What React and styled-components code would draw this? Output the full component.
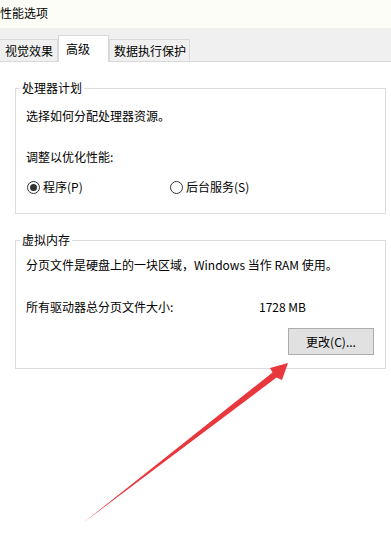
import React from 'react'
import styled, { createGlobalStyle } from 'styled-components'

const GlobalStyle = createGlobalStyle`
  html, body {
    margin: 0;
    padding: 0;
    background: #fff;
  }
  body {
    font-family: "Noto Sans CJK SC", "Microsoft YaHei", sans-serif;
    font-size: 12px;
    color: #000;
  }
`

const Window = styled.div`
  position: relative;
  width: 391px;
  height: 542px;
  overflow: hidden;
  background: #fff;
`

const TitleBar = styled.div`
  height: 28px;
  line-height: 26px;
  background: #fdfdf8;
`

const TabStrip = styled.div`
  display: flex;
  align-items: flex-end;
  height: 34px;
  box-sizing: border-box;
  background: #f0f0f0;
  border-bottom: 1px solid #d9d9d9;
`

const Tab = styled.div`
  box-sizing: border-box;
  width: ${p => p.width}px;
  height: ${p => (p.active ? 27 : 23)}px;
  margin-bottom: -1px;
  padding-left: ${p => p.pad}px;
  line-height: ${p => (p.active ? 26 : 21)}px;
  background: ${p => (p.active ? '#fff' : '#f0f0f0')};
  border: 1px solid #d9d9d9;
  border-bottom: ${p => (p.active ? 'none' : '1px solid #d9d9d9')};
  border-left: ${p => (p.first ? 'none' : '1px solid #d9d9d9')};
  white-space: nowrap;
`

const Content = styled.div`
  padding: 0 5px 0 15px;
`

const Group = styled.fieldset`
  margin: 18px 0 0;
  padding: 0;
  min-width: 0;
  border: 1px solid #dcdcdc;
`

const Legend = styled.legend`
  margin-left: 4px;
  padding: 0 2px;
  line-height: 16px;
`

const Body = styled.div`
  padding: 0 11px ${p => p.bottom}px 10px;
`

const Line = styled.div`
  margin-top: ${p => p.top}px;
  line-height: 16px;
  white-space: nowrap;
`

const RadioRow = styled.div`
  display: flex;
  margin-top: 14px;
  line-height: 16px;
`

const Option = styled.label`
  display: flex;
  align-items: center;
  gap: 3px;
  width: ${p => (p.width ? `${p.width}px` : 'auto')};
`

const RadioDot = styled.span`
  position: relative;
  box-sizing: border-box;
  width: 13px;
  height: 13px;
  margin-left: 1px;
  border: 1px solid #333;
  border-radius: 50%;
  background: #fff;

  &::after {
    content: '';
    display: ${p => (p.checked ? 'block' : 'none')};
    position: absolute;
    left: 2px;
    top: 2px;
    width: 7px;
    height: 7px;
    border-radius: 50%;
    background: #333;
  }
`

const SizeRow = styled.div`
  display: grid;
  grid-template-columns: 233px auto;
  margin-top: 26px;
  line-height: 16px;
`

const ButtonRow = styled.div`
  display: flex;
  justify-content: flex-end;
  margin-top: 13px;
`

const Button = styled.button`
  box-sizing: border-box;
  width: 86px;
  height: 27px;
  padding: 0;
  font: inherit;
  color: #000;
  background: #e1e1e1;
  border: 1px solid #adadad;
`

const Arrow = styled.svg`
  position: absolute;
  left: 0;
  top: 0;
  pointer-events: none;
`

const App = () => (
  <>
    <GlobalStyle />
    <Window>
      <TitleBar>性能选项</TitleBar>
      <TabStrip>
        <Tab first width={58} pad={5}>视觉效果</Tab>
        <Tab active width={51} pad={7}>高级</Tab>
        <Tab width={81} pad={4}>数据执行保护</Tab>
      </TabStrip>

      <Content>
        <Group>
          <Legend>处理器计划</Legend>
          <Body bottom={18}>
            <Line top={12}>选择如何分配处理器资源。</Line>
            <Line top={25}>调整以优化性能:</Line>
            <RadioRow>
              <Option width={143}>
                <RadioDot checked />
                程序(P)
              </Option>
              <Option>
                <RadioDot />
                后台服务(S)
              </Option>
            </RadioRow>
          </Body>
        </Group>

        <Group>
          <Legend>虚拟内存</Legend>
          <Body bottom={13}>
            <Line top={9}>分页文件是硬盘上的一块区域，Windows 当作 RAM 使用。</Line>
            <SizeRow>
              <span>所有驱动器总分页文件大小:</span>
              <span>1728 MB</span>
            </SizeRow>
            <ButtonRow>
              <Button>更改(C)...</Button>
            </ButtonRow>
          </Body>
        </Group>
      </Content>

      <Arrow width="391" height="542" viewBox="0 0 391 542">
        <polygon
          points="288,363 282,380 276.5,377.5 83,523 272.5,372.5 270,368"
          fill="#e8383d"
        />
      </Arrow>
    </Window>
  </>
)

export default App
